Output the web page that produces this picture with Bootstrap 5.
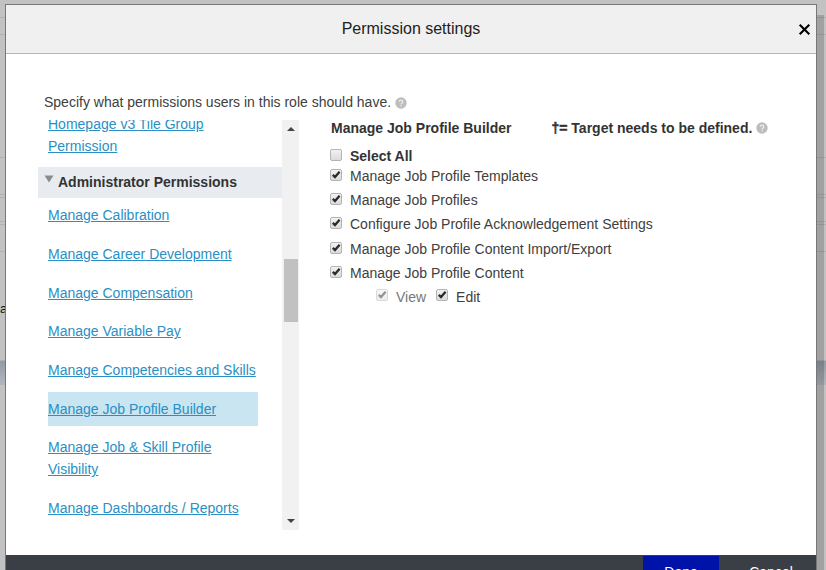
<!DOCTYPE html>
<html lang="en">
<head>
<meta charset="utf-8">
<meta name="viewport" content="width=device-width, initial-scale=1">
<title>Permission settings</title>
<link href="https://cdn.jsdelivr.net/npm/bootstrap@5.3.0/dist/css/bootstrap.min.css" rel="stylesheet">
<style>
body{font-family:"Liberation Sans",Arial,sans-serif;font-size:14px;line-height:22px;color:#404040;background:#c2c2c2;height:570px}
/* dimmed page behind the dialog */
.backpage{height:570px}
.backpage>div{border-bottom:1px solid #b0b0b0;flex:none}
.backpage>.bp-band{background:linear-gradient(#939ba3,#b0b6bc);border-bottom-color:#b0b6bc}
.bp-text{color:#111;line-height:18px;font-size:13px;padding-top:48px}
.dialog-box{left:5px;top:4px;width:812px;height:566px;border:1px solid #777;border-bottom:0;background:#fff;z-index:2;overflow:hidden}
.dialog-shade{left:817px;top:15px;width:7px;bottom:0;background:rgba(0,0,0,.17);z-index:1}
.dialog-head{height:49px;background:#f0f0f0;border-bottom:1px solid #b4b4b4;color:#222;font-size:16px}
.close-x{width:13px;height:13px;right:5px;top:18px}
.dialog-main{height:501px;padding:37px 0 0 32px}
.intro{height:29px;padding-left:6px}
.intro .qmark{margin-top:6px}
.side-wrap{width:261px;height:410px}
.side-list{width:244px}
.side-inner{margin-top:-7.2px}
.side-inner a{display:block;margin:0 24px 4.65px 10px;padding:6px 0;color:#2a8fc4;text-decoration:underline;text-underline-offset:1px;white-space:nowrap}
.side-inner a.first{padding-top:0}
.side-inner a.current{background:#c9e5f1}
.group-head{height:31px;background:#e8ecf0;color:#333;font-weight:bold;padding:0 0 1px 6px}
.group-head svg{margin:-7px 4px 0 0}
.scroller{width:17px;background:#f1f1f1}
.thumb{width:14px;height:63px;background:#c1c1c1;margin-top:128px}
.detail{padding-left:32px}
.detail-head{height:16px;font-weight:bold;color:#333}
.target-note{margin-left:40px}
.dagger{-webkit-text-stroke:.5px #333}
.opt{height:24.2px}
.opt .tick{margin:-2px 8px 0 -1px}
.opt.select-all{height:17px;margin-top:3px;color:#333}
.sub-opts{height:24px;padding-left:45px}
.sub-opts .tick{margin-top:-3px;margin-right:8px}
.muted-opt{color:#777;margin-right:10px}
.tick,.qmark{flex:none}
.dialog-foot{height:66px;background:#3a3f45;color:#fff}
.foot-btn{border:0;border-radius:0;width:76px;height:32px;font-size:14px;line-height:22px;padding:5px 0;color:#fff;margin-top:1px}
.foot-btn.done{background:#0013a8;margin-right:14px}
.foot-btn.cancel{margin-right:7px}
</style>
</head>
<body class="overflow-hidden position-relative">
<svg width="0" height="0" class="position-absolute">
  <defs>
    <linearGradient id="boxfill" x2="0" y2="1"><stop stop-color="#f3f3f3"/><stop offset="1" stop-color="#dadada"/></linearGradient>
    <symbol id="box" viewBox="0 0 12 12"><rect x=".5" y=".5" width="11" height="11" rx="1.5" fill="url(#boxfill)" stroke="#b4b4b4"/></symbol>
    <symbol id="checked" viewBox="0 0 12 12"><use href="#box"/><path d="M2.8 5.9 5 8.1 9.6 2.8" fill="none" stroke="#2b2b2b" stroke-width="2.3"/></symbol>
    <symbol id="q" viewBox="0 0 12 12"><circle cx="6" cy="6" r="5.7" fill="#bdbdbd"/><path d="M4.3 4.8C4.3 2.5 7.8 2.7 7.8 4.7 7.8 6 6.1 5.9 6.1 7.4M6.1 8.2v1.3" fill="none" stroke="#eee" stroke-width="1.2"/></symbol>
  </defs>
</svg>

<div class="backpage d-flex flex-column">
  <div style="height:18px"></div>
  <div style="height:17px"></div>
  <div style="height:123px"></div>
  <div style="height:37px"></div>
  <div style="height:3px"></div>
  <div style="height:24px"></div>
  <div style="height:3px"></div>
  <div style="height:27px"></div>
  <div class="bp-text" style="height:109px">a</div>
  <div class="bp-band" style="height:24px"></div>
</div>
<div class="dialog-shade position-absolute"></div>

<div class="dialog-box position-absolute" role="dialog">
  <div class="dialog-head d-flex align-items-center justify-content-center position-relative">
    <span>Permission settings</span>
    <svg class="close-x position-absolute" viewBox="0 0 13 13"><path d="M1.7 1.7 11.3 11.3M11.3 1.7 1.7 11.3" stroke="#000" stroke-width="2.1"/></svg>
  </div>

  <div class="dialog-main">
    <div class="intro d-flex align-items-start gap-1"><span>Specify what permissions users in this role should have.</span><svg class="qmark" width="12" height="12"><use href="#q"/></svg></div>
    <div class="d-flex">
      <div class="side-wrap d-flex overflow-hidden">
        <div class="side-list overflow-hidden">
          <div class="side-inner">
            <a class="first" href="#">Homepage v3 Tile Group<br>Permission</a>
            <div class="group-head d-flex align-items-center"><svg width="10" height="8"><path d="M.5.5h9L5 7.5z" fill="#8b8b8b"/></svg>Administrator Permissions</div>
            <a href="#">Manage Calibration</a>
            <a href="#">Manage Career Development</a>
            <a href="#">Manage Compensation</a>
            <a href="#">Manage Variable Pay</a>
            <a href="#">Manage Competencies and Skills</a>
            <a class="current" href="#">Manage Job Profile Builder</a>
            <a href="#">Manage Job &amp; Skill Profile<br>Visibility</a>
            <a href="#">Manage Dashboards / Reports</a>
          </div>
        </div>
        <div class="scroller d-flex flex-column align-items-center">
          <svg width="8" height="11"><path d="M0 11 4 7 8 11z" fill="#444"/></svg>
          <div class="thumb"></div>
          <svg class="mt-auto mb-1" width="8" height="8"><path d="M0 1h8L4 5z" fill="#444"/></svg>
        </div>
      </div>

      <div class="detail">
        <div class="detail-head d-flex align-items-center"><span>Manage Job Profile Builder</span><span class="target-note"><span class="dagger">†=</span> Target needs to be defined.</span><svg class="qmark ms-1" width="12" height="12"><use href="#q"/></svg></div>
        <div class="pt-2">
          <div class="opt select-all d-flex align-items-center fw-bold"><svg class="tick" width="12" height="12"><use href="#box"/></svg>Select All</div>
          <div class="opt d-flex align-items-center"><svg class="tick" width="12" height="12"><use href="#checked"/></svg>Manage Job Profile Templates</div>
          <div class="opt d-flex align-items-center"><svg class="tick" width="12" height="12"><use href="#checked"/></svg>Manage Job Profiles</div>
          <div class="opt d-flex align-items-center"><svg class="tick" width="12" height="12"><use href="#checked"/></svg>Configure Job Profile Acknowledgement Settings</div>
          <div class="opt d-flex align-items-center"><svg class="tick" width="12" height="12"><use href="#checked"/></svg>Manage Job Profile Content Import/Export</div>
          <div class="opt d-flex align-items-center"><svg class="tick" width="12" height="12"><use href="#checked"/></svg>Manage Job Profile Content</div>
          <div class="sub-opts d-flex align-items-center"><svg class="tick opacity-50" width="12" height="12"><use href="#checked"/></svg><span class="muted-opt">View</span><svg class="tick" width="12" height="12"><use href="#checked"/></svg><span>Edit</span></div>
        </div>
      </div>
    </div>
  </div>

  <div class="dialog-foot d-flex justify-content-end align-items-start">
    <button class="btn foot-btn done">Done</button>
    <button class="btn foot-btn cancel">Cancel</button>
  </div>
</div>
<script src="https://cdn.jsdelivr.net/npm/bootstrap@5.3.0/dist/js/bootstrap.bundle.min.js"></script>
</body>
</html>
